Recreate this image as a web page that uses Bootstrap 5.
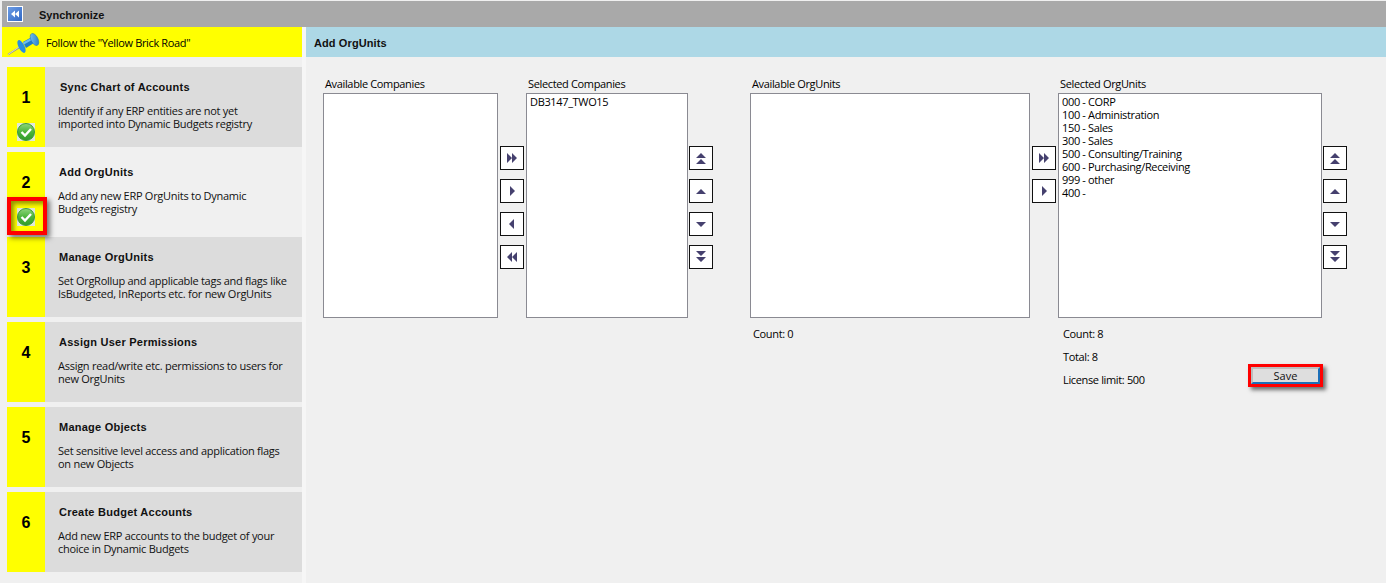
<!doctype html>
<html lang="en"><head><meta charset="utf-8"><title>Synchronize</title>
<link href="https://cdn.jsdelivr.net/npm/bootstrap@5.3.0/dist/css/bootstrap.min.css" rel="stylesheet">
<style>
html,body{height:100%}
body{background:#f0f0f0;color:#000;font-family:"Open Sans","Noto Sans",sans-serif;font-size:11px;line-height:13px;letter-spacing:-.35px;overflow:hidden}
.app-shell{height:583px;padding:1px 0 0 2px}
.title-bar{height:26px;background:#a9a9a9;padding-left:5px}
.title-text{font:bold 11px/13px "Liberation Sans",sans-serif;letter-spacing:0;margin:2px 0 0 16px;color:#111}
.body-row{height:556px}
.side-pane{width:300px;flex:none}
.road-bar{height:30px;background:#ff0;padding-left:5px}
.road-text{margin-left:6px}
.step-list{padding:10px 0 0 5px;gap:5px}
.step-item{height:80px}
.step-num{width:38px;flex:none;background:#ff0;padding-top:22px;font:bold 16px/18px "Liberation Sans",sans-serif;letter-spacing:0}
.step-body{background:#dcdcdc;padding:14px 6px 0 13px}
.step-on .step-body{background:#f0f0f0}
.step-head{font:bold 11px/13px "Liberation Sans",sans-serif;letter-spacing:.25px;color:#111;margin:0 0 10px 1px}
.step-first{margin-left:2px}
.step-copy{line-height:13px;color:#111;letter-spacing:-.27px}
.tick{position:absolute;left:10px;top:56px}
.mark-box{position:absolute;left:0;top:45px;width:40px;height:38px;border:4px solid #f00;box-shadow:3px 3px 5px rgba(0,0,0,.5),inset 3px 3px 4px rgba(60,60,0,.55)}
.side-gap{width:4px;flex:none;background:#f6f6f6}
.main-pane{background:#f0f0f0}
.main-head{height:30px;background:#add8e6;padding:2px 0 0 8px;font:bold 11px/13px "Liberation Sans",sans-serif;letter-spacing:.1px;color:#111}
.main-work{padding:20px 0 0 17px}
.box-label{height:16px;padding-left:2px}
.list-frame{height:225px;background:#fff;border:1px solid #8a8a92;padding:1px 3px;overflow:hidden}
.w-a{width:175px}.w-b{width:162px}.w-c{width:280px}.w-d{width:264px}
.arrow-col{width:24px;flex:none;margin-top:69px;gap:9px}
.arrow-btn{width:24px;height:24px;padding:0;border:1px solid #111;border-radius:0;background:#fff;display:flex;align-items:center;justify-content:center}
.gap-in,.gap-right{margin-left:2px}
.gap-tail{margin-left:1px}
.gap-big{margin-left:37px}
.stat-line{height:23px;padding-left:5px}
.stat-left{padding-left:3px}
.stat-zone{margin-top:9px}
.save-ring{border:3px solid #f00;width:75px;height:23px;margin:0 -1px 9px 0;box-shadow:3px 3px 4px rgba(0,0,0,.55)}
.save-btn{display:block;width:100%;height:100%;padding:0;border:2px solid #bdbdbd;border-right-color:#1c6fb8;border-bottom-color:#1c6fb8;border-radius:0;background:#dedede;font-size:11px;line-height:12px;color:#111}
</style></head>
<body>
<svg width="0" height="0" class="d-block"><defs>
<linearGradient id="gk" x1="0" y1="0" x2="0" y2="1"><stop offset="0" stop-color="#8fd67c"/><stop offset=".5" stop-color="#4cb53a"/><stop offset="1" stop-color="#2f9a2a"/></linearGradient>
<linearGradient id="gb" x1="0" y1="0" x2="1" y2="1"><stop offset="0" stop-color="#6f9fe6"/><stop offset="1" stop-color="#2f66c4"/></linearGradient>
<linearGradient id="gp" x1="0" y1="0" x2="1" y2="1"><stop offset="0" stop-color="#7cc6f2"/><stop offset="1" stop-color="#1c78c8"/></linearGradient>
<symbol id="ok" viewBox="0 0 18 18"><rect width="18" height="18" fill="#dfe8dc"/><circle cx="9" cy="9" r="8.500" fill="url(#gk)" stroke="#3f9a38"/><path d="M4.500 9L8 12.500L14 6" fill="none" stroke="#fff" stroke-width="2.400"/></symbol>
<symbol id="rr" viewBox="0 0 14 12"><path d="M2 1L7 6L2 11ZM7 1L12 6L7 11Z" fill="#45406e"/></symbol>
<symbol id="r" viewBox="0 0 14 12"><path d="M5 1L10 6L5 11Z" fill="#45406e"/></symbol>
<symbol id="l" viewBox="0 0 14 12"><path d="M9 1L4 6L9 11Z" fill="#45406e"/></symbol>
<symbol id="ll" viewBox="0 0 14 12"><path d="M7 1L2 6L7 11ZM12 1L7 6L12 11Z" fill="#45406e"/></symbol>
<symbol id="uu" viewBox="0 0 14 14"><path d="M2 7L7 2L12 7ZM2 13L7 8L12 13Z" fill="#45406e"/></symbol>
<symbol id="u" viewBox="0 0 14 14"><path d="M2 10L7 5L12 10Z" fill="#45406e"/></symbol>
<symbol id="d" viewBox="0 0 14 14"><path d="M2 5L7 10L12 5Z" fill="#45406e"/></symbol>
<symbol id="dd" viewBox="0 0 14 14"><path d="M2 1L7 6L12 1ZM2 7L7 12L12 7Z" fill="#45406e"/></symbol>
</defs></svg>
<div class="app-shell">
  <div class="title-bar d-flex align-items-center">
    <svg width="16" height="16" viewBox="0 0 16 16"><rect x=".5" y=".5" width="15" height="15" fill="url(#gb)" stroke="#fff"/><path d="M8 4.500V11.500L4 8ZM12 4.500V11.500L8 8Z" fill="#fff"/></svg>
    <span class="title-text">Synchronize</span>
  </div>
  <div class="body-row d-flex">
    <div class="side-pane">
      <div class="road-bar d-flex align-items-center">
        <svg width="33" height="28" viewBox="7 28 33 28"><path d="M8 54.500L20 47" stroke="#9a9a80" stroke-width="1.500"/><path d="M8 54.500L19 47" stroke="#f4f4e4" stroke-width=".7"/><ellipse cx="21.500" cy="46.500" rx="3" ry="7" transform="rotate(-27 21.500 46.500)" fill="#2a8ee0"/><path d="M23 42L31 37.500L34 43L26 48Z" fill="#1f7cc8"/><path d="M23 42.500L31 38L32 40L24 44.500Z" fill="#6dbdf0"/><ellipse cx="34.500" cy="39.500" rx="3.500" ry="6.500" transform="rotate(-27 34.500 39.500)" fill="url(#gp)" stroke="#1a6fb8" stroke-width=".5"/></svg>
        <span class="road-text">Follow the "Yellow Brick Road"</span>
      </div>
      <div class="step-list d-flex flex-column">
        <div class="step-item d-flex position-relative"><div class="step-num text-center">1</div><div class="step-body flex-grow-1"><div class="step-head step-first">Sync Chart of Accounts</div><div class="step-copy">Identify if any ERP entities are not yet<br>imported into Dynamic Budgets registry</div></div>
          <svg class="tick" width="18" height="18"><use href="#ok"/></svg></div>
        <div class="step-item step-on d-flex position-relative"><div class="step-num text-center">2</div><div class="step-body flex-grow-1"><div class="step-head">Add OrgUnits</div><div class="step-copy">Add any new ERP OrgUnits to Dynamic<br>Budgets registry</div></div>
          <svg class="tick" width="18" height="18"><use href="#ok"/></svg><div class="mark-box"></div></div>
        <div class="step-item d-flex"><div class="step-num text-center">3</div><div class="step-body flex-grow-1"><div class="step-head">Manage OrgUnits</div><div class="step-copy">Set OrgRollup and applicable tags and flags like<br>IsBudgeted, InReports etc. for new OrgUnits</div></div></div>
        <div class="step-item d-flex"><div class="step-num text-center">4</div><div class="step-body flex-grow-1"><div class="step-head">Assign User Permissions</div><div class="step-copy">Assign read/write etc. permissions to users for<br>new OrgUnits</div></div></div>
        <div class="step-item d-flex"><div class="step-num text-center">5</div><div class="step-body flex-grow-1"><div class="step-head">Manage Objects</div><div class="step-copy">Set sensitive level access and application flags<br>on new Objects</div></div></div>
        <div class="step-item d-flex"><div class="step-num text-center">6</div><div class="step-body flex-grow-1"><div class="step-head">Create Budget Accounts</div><div class="step-copy">Add new ERP accounts to the budget of your<br>choice in Dynamic Budgets</div></div></div>
      </div>
    </div>
    <div class="side-gap"></div>
    <div class="main-pane flex-grow-1">
      <div class="main-head d-flex align-items-center">Add OrgUnits</div>
      <div class="main-work d-flex align-items-start">
        <div class="w-a"><div class="box-label">Available Companies</div><div class="list-frame"></div></div>
        <div class="arrow-col gap-in d-flex flex-column">
          <button class="arrow-btn"><svg width="14" height="12"><use href="#rr"/></svg></button>
          <button class="arrow-btn"><svg width="14" height="12"><use href="#r"/></svg></button>
          <button class="arrow-btn"><svg width="14" height="12"><use href="#l"/></svg></button>
          <button class="arrow-btn"><svg width="14" height="12"><use href="#ll"/></svg></button>
        </div>
        <div class="w-b gap-right"><div class="box-label">Selected Companies</div><div class="list-frame">DB3147_TWO15</div></div>
        <div class="arrow-col gap-tail d-flex flex-column">
          <button class="arrow-btn"><svg width="14" height="14"><use href="#uu"/></svg></button>
          <button class="arrow-btn"><svg width="14" height="14"><use href="#u"/></svg></button>
          <button class="arrow-btn"><svg width="14" height="14"><use href="#d"/></svg></button>
          <button class="arrow-btn"><svg width="14" height="14"><use href="#dd"/></svg></button>
        </div>
        <div class="w-c gap-big"><div class="box-label">Available OrgUnits</div><div class="list-frame"></div><div class="stat-zone"><div class="stat-line stat-left">Count: 0</div></div></div>
        <div class="arrow-col gap-in d-flex flex-column">
          <button class="arrow-btn"><svg width="14" height="12"><use href="#rr"/></svg></button>
          <button class="arrow-btn"><svg width="14" height="12"><use href="#r"/></svg></button>
        </div>
        <div class="w-d gap-right"><div class="box-label">Selected OrgUnits</div>
          <div class="list-frame">000 - CORP<br>100 - Administration<br>150 - Sales<br>300 - Sales<br>500 - Consulting/Training<br>600 - Purchasing/Receiving<br>999 - other<br>400 -</div>
          <div class="stat-zone d-flex justify-content-between align-items-end">
            <div><div class="stat-line">Count: 8</div><div class="stat-line">Total: 8</div><div class="stat-line">License limit: 500</div></div>
            <div class="save-ring"><button class="save-btn">Save</button></div>
          </div>
        </div>
        <div class="arrow-col gap-tail d-flex flex-column">
          <button class="arrow-btn"><svg width="14" height="14"><use href="#uu"/></svg></button>
          <button class="arrow-btn"><svg width="14" height="14"><use href="#u"/></svg></button>
          <button class="arrow-btn"><svg width="14" height="14"><use href="#d"/></svg></button>
          <button class="arrow-btn"><svg width="14" height="14"><use href="#dd"/></svg></button>
        </div>
      </div>
    </div>
  </div>
</div>
</body></html>
